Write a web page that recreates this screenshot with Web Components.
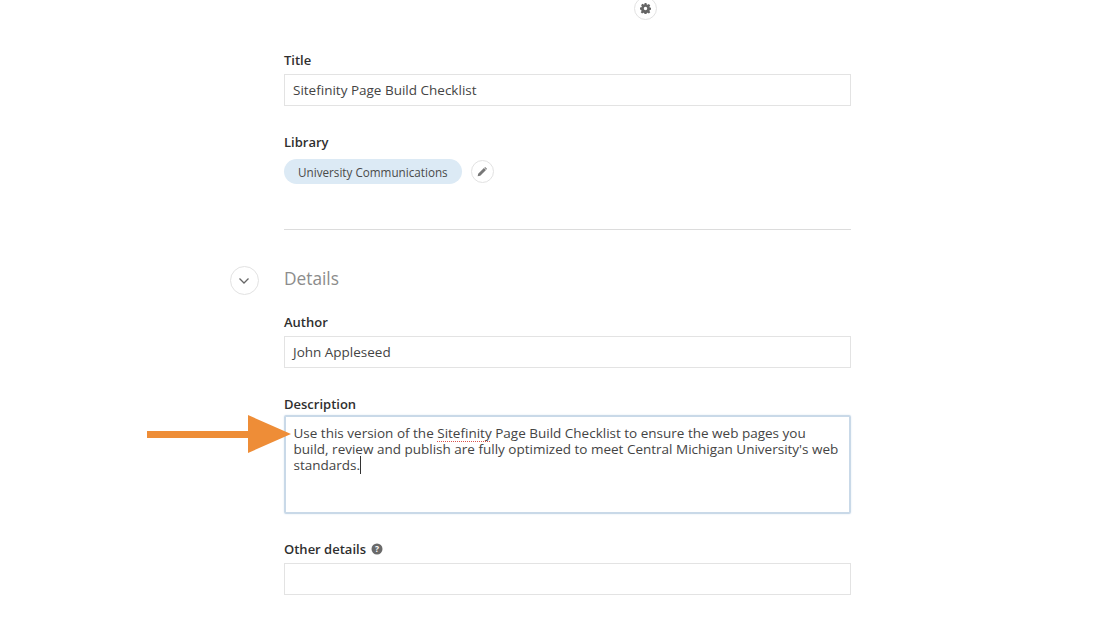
<!DOCTYPE html>
<html><head><meta charset="utf-8"><style>
html,body{margin:0;padding:0;background:#fff;overflow:hidden}
body{height:625px;font-family:"Open Sans",sans-serif;color:#3a3a3a}
</style></head><body>
<template id="t-page"><style>
:host{display:block;width:567px;margin-left:284px;position:relative}
</style><slot></slot></template>
<template id="t-field"><style>
:host{display:block}
label{display:flex;align-items:center;gap:5px;font-size:13px;font-weight:600;line-height:18px;height:18px;color:#2f2f2f}
.box{margin-top:5px;box-sizing:border-box;border:1px solid #e3e3e3;height:32px;padding:0 8px;font-size:13.5px;line-height:30px;color:#444;white-space:nowrap}
:host([area]) .box{position:relative;height:99px;margin-top:2px;border:2px solid #c9d9e8;border-radius:2px;padding:8px 8px 8px 7.500px;line-height:16px;white-space:normal;box-shadow:0 0 2px #dbe6f0}
</style><label><slot name="label"></slot></label><div class="box"><slot></slot></div></template>
<template id="t-icon-btn"><style>
:host{display:flex;align-items:center;justify-content:center;box-sizing:border-box;border:1px solid #e2e2e2;border-radius:50%;background:#fff;flex:none}
</style><slot></slot></template>
<template id="t-chip"><style>
:host{display:inline-flex;align-items:center;height:25px;padding:0 14px;border-radius:13px;background:#dceaf5;font-size:11.700px;color:#4a4a4a;white-space:nowrap}
</style><slot></slot></template>
<template id="t-arrow"><style>
:host{display:block;position:absolute;left:-139px;top:-2px;width:144px;height:38px;line-height:0}
</style><svg width="144" height="38" viewBox="0 0 144 38"><path d="M0 16H101V0L144 19L101 38V23H0Z" fill="#ee8d37"/></svg></template>

<app-page>
  <div style="display:flex;justify-content:flex-end;padding-right:194px;height:24px;margin-top:-3px;box-sizing:border-box">
    <icon-btn style="width:23px;height:23px">
      <svg width="11" height="11" viewBox="0 0 16 16"><path fill="#666" fill-rule="evenodd" d="M6.600 0h2.800l.4 2.100 1.300.6 1.800-1.200 2 2-1.200 1.800.6 1.300 2.100.4v2.800l-2.100.4-.6 1.300 1.200 1.800-2 2-1.800-1.200-1.300.6-.4 2.100H6.600l-.4-2.100-1.300-.6-1.800 1.200-2-2 1.200-1.800-.6-1.300L0 9.400V6.600l2.100-.4.600-1.300-1.200-1.800 2-2 1.800 1.200 1.300-.6zM8 5.500a2.500 2.500 0 1 0 0 5 2.500 2.500 0 0 0 0-5z"/></svg>
    </icon-btn>
  </div>
  <form-field style="margin-top:30px"><span slot="label">Title</span>Sitefinity Page Build Checklist</form-field>
  <div style="margin-top:27px;font-size:13px;font-weight:600;line-height:18px;color:#2f2f2f">Library</div>
  <div style="display:flex;align-items:center;gap:9px;margin-top:8px">
    <lib-chip>University Communications</lib-chip>
    <icon-btn style="width:23px;height:23px">
      <svg width="10" height="10" viewBox="0 0 12 12"><path fill="#777" d="M8.300 1.200l2.500 2.500-6.900 6.900L.8 11.200l.6-3.100zM9 .5c.4-.4 1-.4 1.400 0l1.100 1.100c.4.4.4 1 0 1.400l-.2.200L8.800.7z"/></svg>
    </icon-btn>
  </div>
  <hr style="border:0;border-top:1px solid #dcdcdc;margin:45px 0 0;height:0">
  <div style="display:flex;align-items:center;gap:25px;margin:36px 0 0 -54px;height:29px">
    <icon-btn style="width:29px;height:29px">
      <svg width="12" height="8" viewBox="0 0 12 8" style="margin-right:2px"><path d="M1.500 1.500L6 6l4.500-4.500" fill="none" stroke="#666" stroke-width="1.300"/></svg>
    </icon-btn>
    <div style="font-size:17.300px;color:#8c8c8c;line-height:26px;margin-top:-3px">Details</div>
  </div>
  <form-field style="margin-top:18px"><span slot="label">Author</span>John Appleseed</form-field>
  <form-field area style="margin-top:27px"><span slot="label">Description</span><arrow-mark></arrow-mark>Use this version of the <span style="text-decoration:underline dotted #d9534f 1px;text-underline-offset:3px;text-decoration-skip-ink:none">Sitefinity</span> Page Build Checklist to ensure the web pages you build, review and publish are fully optimized to meet Central Michigan University's web standards.<span style="border-right:1px solid #333"></span></form-field>
  <form-field style="margin-top:26px"><span slot="label">Other details</span><svg slot="label" width="12" height="12" viewBox="0 0 12 12"><circle cx="6" cy="6" r="5.500" fill="#6a6a6a"/><text x="6" y="9" text-anchor="middle" font-size="8.500" font-weight="700" font-family="Open Sans" fill="#fff">?</text></svg></form-field>
</app-page>
<script>
function def(name,id){customElements.define(name,class extends HTMLElement{constructor(){super();this.attachShadow({mode:'open'}).appendChild(document.getElementById(id).content.cloneNode(true))}})}
def('app-page','t-page');def('form-field','t-field');def('icon-btn','t-icon-btn');def('lib-chip','t-chip');def('arrow-mark','t-arrow');
</script>
</body></html>
